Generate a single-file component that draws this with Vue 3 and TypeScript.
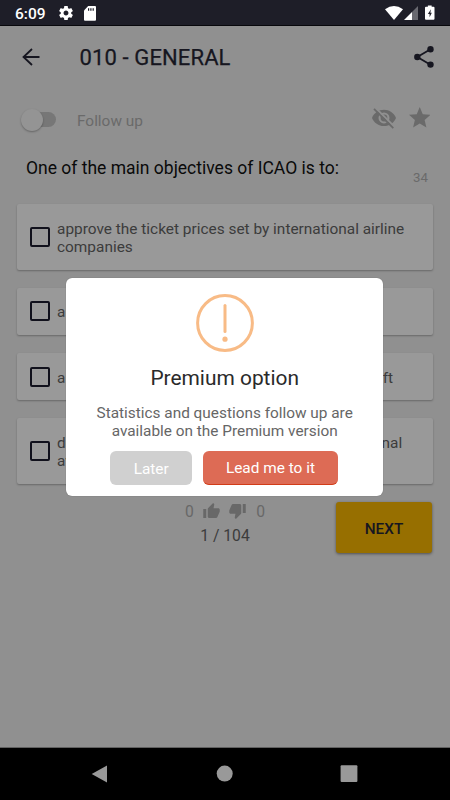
<script setup lang="ts">
import { ref } from 'vue'

interface Answer {
  id: number
  lines: string[]
  checked: boolean
}

const answers = ref<Answer[]>([
  { id: 1, lines: ['approve the ticket prices set by international airline', 'companies'], checked: false },
  { id: 2, lines: ['approve the ticket prices'], checked: false },
  { id: 3, lines: ['approve new international airlines with jet aircraft'], checked: false },
  { id: 4, lines: ['develop principles and techniques for international', 'aviation'], checked: false },
])

const showDialog = ref(true)

function toggle(answer: Answer) {
  answer.checked = !answer.checked
}
</script>

<template>
  <div class="screen">
    <header class="status">
      <span class="clock">6:09</span>
      <svg class="gear" viewBox="2 2 20 20"><path d="M19.43 12.98c.04-.32.07-.64.07-.98s-.03-.66-.07-.98l2.110-1.650c.19-.15.24-.42.12-.64l-2-3.460c-.12-.22-.39-.3-.61-.22l-2.490 1c-.52-.4-1.080-.73-1.690-.98l-.38-2.650C14.460 2.180 14.250 2 14 2h-4c-.25 0-.46.18-.49.42l-.38 2.650c-.61.25-1.170.59-1.690.98l-2.490-1c-.23-.09-.49 0-.61.22l-2 3.460c-.13.22-.07.49.12.64l2.110 1.650c-.04.32-.07.65-.07.98s.03.66.07.98l-2.110 1.650c-.19.15-.24.42-.12.64l2 3.460c.12.22.39.3.61.22l2.490-1c.52.4 1.080.73 1.690.98l.38 2.650c.03.24.24.42.49.42h4c.25 0 .46-.18.49-.42l.38-2.650c.61-.25 1.170-.59 1.690-.98l2.490 1c.23.09.49 0 .61-.22l2-3.460c.12-.22.07-.49-.12-.64l-2.110-1.650zM12 15.500c-1.930 0-3.500-1.570-3.500-3.500s1.570-3.500 3.500-3.500 3.500 1.570 3.500 3.500-1.570 3.500-3.500 3.500z" /></svg>
      <svg class="sd" viewBox="0 0 12 15"><path d="M4.200 0H11q1 0 1 1v12.800q0 1-1 1H1q-1 0-1-1V4.400z" /><path class="slots" d="M4 2.200h1.200v2.600H4zM6.300 2.200h1.200v2.600H6.300zM8.600 2.200h1.200v2.600H8.600z" /></svg>
      <span class="spacer"></span>
      <svg class="wifi" viewBox="0 0 18 14"><path d="M0 3.200Q9-3.200 18 3.200L9 14z" /></svg>
      <svg class="signal" viewBox="0 0 14 14"><path class="dim" d="M14 0v14H8V6z" /><path d="M8 6v8H0z" /></svg>
      <svg class="battery" viewBox="0 0 10 15"><path d="M3 0h4v1.500h2q1 0 1 1V14q0 1-1 1H1q-1 0-1-1V2.500q0-1 1-1h2z" /><path class="bolt" d="M6.300 4L3 9h1.800v3.600L7.200 7.800H5.600z" /></svg>
    </header>

    <div class="toolbar">
      <svg class="back" viewBox="0 0 18 18"><path d="M10 1L1.500 9L10 17M1.500 9H17.500" /></svg>
      <h1>010 - GENERAL</h1>
      <svg class="share" viewBox="0 0 20 22"><path d="M16.500 3.200L3.300 11L16.500 18.700" /><circle cx="16.500" cy="3.300" r="3.200" /><circle cx="3.300" cy="11" r="3.200" /><circle cx="16.500" cy="18.600" r="3.200" /></svg>
    </div>

    <div class="follow">
      <span class="switch"><i></i></span>
      <span class="follow-label">Follow up</span>
      <span class="spacer"></span>
      <svg class="eye" viewBox="0 0 24 21"><path d="M12 1.800C6.600 1.800 2 5 0 9.900c2 4.800 6.600 8.100 12 8.100s10-3.300 12-8.100c-2-4.900-6.600-8.100-12-8.100zm0 13.600a5.500 5.500 0 1 1 0-11a5.500 5.500 0 0 1 0 11z" /><circle cx="12" cy="10" r="3.400" /><path class="gap" d="M3.700 0L23.200 19.500" /><path class="slash" d="M2 .9L21.300 20.200" /></svg>
      <svg class="star" viewBox="2 2 20 19"><path d="M12 17.270L18.180 21l-1.640-7.030L22 9.240l-7.190-.61L12 2 9.190 8.630 2 9.240l5.460 4.730L5.820 21z" /></svg>
    </div>

    <div class="question">
      <p>One of the main objectives of ICAO is to:</p>
      <span>34</span>
    </div>

    <ul class="answers">
      <li v-for="answer in answers" :key="answer.id" :class="{ tall: answer.lines.length > 1 }" @click="toggle(answer)">
        <span class="box" :class="{ on: answer.checked }"></span>
        <div><p v-for="line in answer.lines" :key="line">{{ line }}</p></div>
      </li>
    </ul>

    <footer class="bottom">
      <div class="tally">
        <div class="votes">
          <span>0</span>
          <svg viewBox="1 1 22 20"><path d="M1 21h4V9H1v12zm22-11c0-1.100-.9-2-2-2h-6.310l.95-4.570.03-.32c0-.41-.17-.79-.44-1.060L14.170 1 7.590 7.590C7.220 7.950 7 8.450 7 9v10c0 1.100.9 2 2 2h9c.83 0 1.540-.5 1.840-1.220l3.020-7.050c.09-.23.14-.47.14-.73v-2z" /></svg>
          <svg class="down" viewBox="1 3 22 20"><path d="M15 3H6c-.83 0-1.540.5-1.840 1.220l-3.020 7.050c-.09.23-.14.47-.14.73v2c0 1.100.9 2 2 2h6.310l-.95 4.570-.03.32c0 .41.17.79.44 1.060L9.830 23l6.590-6.590c.36-.36.58-.86.58-1.410V5c0-1.100-.9-2-2-2zm4 0v12h4V3h-4z" /></svg>
          <span>0</span>
        </div>
        <span class="progress">1 / 104</span>
      </div>
      <button class="next">NEXT</button>
    </footer>

    <nav class="system">
      <svg viewBox="0 0 18 18"><path d="M16 .5v17L.7 9z" /></svg>
      <svg viewBox="0 0 18 18"><circle cx="8.700" cy="8.600" r="8" /></svg>
      <svg viewBox="0 0 18 18"><rect x=".6" y=".3" width="16.800" height="16.800" rx="1" /></svg>
    </nav>

    <section v-if="showDialog" class="dialog">
      <svg class="alert" viewBox="0 0 58 58"><circle cx="29" cy="29" r="27.400" /><path d="M29 11.500V37.500" /><circle class="dot" cx="29" cy="45.200" r="2.600" /></svg>
      <h2>Premium option</h2>
      <div class="message">
        <p>Statistics and questions follow up are</p>
        <p>available on the Premium version</p>
      </div>
      <div class="actions">
        <button class="later" @click="showDialog = false">Later</button>
        <button class="lead" @click="showDialog = false">Lead me to it</button>
      </div>
    </section>
  </div>
</template>

<style>
body {
  margin: 0;
  background: #000;
}
</style>

<style scoped>
* {
  box-sizing: border-box;
}

p,
h1,
h2,
ul {
  margin: 0;
  padding: 0;
}

button {
  border: 0;
  padding: 0;
  font-family: inherit;
}

svg {
  display: block;
  flex: none;
  fill: currentColor;
}

.screen {
  position: relative;
  display: flex;
  flex-direction: column;
  width: 450px;
  height: 800px;
  overflow: hidden;
  background: #909090;
  color: #161620;
  font-family: Roboto, "Liberation Sans", sans-serif;
}

.spacer {
  flex: 1;
}

.status {
  display: flex;
  align-items: center;
  height: 26px;
  padding: 0 15.500px 0 15px;
  background: #1e1e28;
  border-bottom: 1px solid #08080c;
  color: #fff;
}

.clock {
  width: 43.500px;
  padding-top: 3px;
  font-size: 15.500px;
  line-height: 20px;
  font-weight: 500;
}

.gear {
  width: 14px;
  height: 14px;
  margin: 1px 11px 0 0;
}

.sd {
  width: 12px;
  height: 15px;
  margin-top: 1px;
}

.slots,
.bolt {
  fill: #1e1e28;
}

.wifi {
  width: 18px;
  height: 14px;
}

.signal {
  width: 14px;
  height: 14px;
  margin: 1px 7px 0 1px;
}

.dim {
  fill: #696970;
}

.battery {
  width: 9.500px;
  height: 15px;
}

.toolbar {
  display: flex;
  align-items: center;
  height: 62px;
  padding: 0 16.500px 0 22px;
}

.back {
  width: 18px;
  height: 18px;
  fill: none;
  stroke: currentColor;
  stroke-width: 1.8;
}

h1 {
  flex: 1;
  margin-left: 39.500px;
  padding-top: 2px;
  font-size: 22px;
  line-height: 28px;
  font-weight: 400;
  -webkit-text-stroke: 0.25px currentColor;
  letter-spacing: 0.12px;
}

.share {
  width: 20px;
  height: 22px;
  margin-bottom: 1px;
}

.share path {
  fill: none;
  stroke: currentColor;
  stroke-width: 1.8;
}

.follow {
  display: flex;
  align-items: center;
  height: 60px;
  padding: 3px 20px 0 21px;
  color: #6a6a6a;
}

.switch {
  display: flex;
  align-items: center;
  width: 35px;
  height: 15px;
  border-radius: 8px;
  background: linear-gradient(90deg, transparent 12px, #777 12px);
}

.switch i {
  width: 22px;
  height: 22px;
  border-radius: 50%;
  background: #949494;
  box-shadow: 0 1px 2px rgba(0, 0, 0, 0.3);
}

.follow-label {
  margin-left: 21px;
  padding-top: 2px;
  font-size: 15.400px;
  line-height: 20px;
}

.eye {
  width: 24px;
  height: 21px;
  margin: 0 12.500px 2px 0;
}

.slash,
.gap {
  fill: none;
  stroke: currentColor;
  stroke-width: 1.8;
}

.gap {
  stroke: #909090;
}

.star {
  width: 21.500px;
  height: 20.500px;
  margin-bottom: 4px;
}

.question {
  display: flex;
  justify-content: space-between;
  height: 56px;
  padding: 10px 22px 0 26px;
}

.question p {
  color: #0a0a0a;
  font-size: 17.500px;
  line-height: 20px;
}

.question span {
  padding-top: 12px;
  color: #6a6a6a;
  font-size: 13.300px;
  line-height: 16px;
}

.answers {
  display: flex;
  flex-direction: column;
  gap: 17.500px;
  padding: 0 17.500px 0 17px;
  list-style: none;
}

.answers li {
  display: flex;
  align-items: center;
  height: 47.700px;
  padding-left: 12.500px;
  border-radius: 2px;
  background: #999;
  box-shadow: 0 1px 2px rgba(0, 0, 0, 0.28);
  color: #3c3c3c;
  font-size: 15.420px;
  line-height: 18px;
  white-space: nowrap;
}

.answers .tall {
  height: 66px;
}

.answers div {
  padding-top: 2px;
}

.box {
  width: 20px;
  height: 20px;
  margin-right: 7.500px;
  border: 2px solid #11111c;
  border-radius: 2px;
}

.box.on {
  background: #11111c;
}

.bottom {
  display: flex;
  justify-content: flex-end;
  padding: 18px 18px 0 0;
}

.tally {
  display: flex;
  flex-direction: column;
  align-items: center;
  width: 80px;
  margin-right: 71px;
  font-size: 15.700px;
}

.votes {
  display: flex;
  align-items: center;
  justify-content: space-between;
  width: 80px;
  height: 20px;
  color: #686868;
}

.votes svg {
  width: 17px;
  height: 15px;
  margin: 0 0 2px -1px;
}

.votes .down {
  margin-bottom: 0;
}

.progress {
  margin-top: 4px;
  color: #3c3c3c;
  line-height: 20px;
}

.next {
  width: 96px;
  height: 51.500px;
  padding-top: 2px;
  border-radius: 3px;
  background: #976f00;
  box-shadow: 0 1px 3px rgba(0, 0, 0, 0.45);
  color: #161620;
  font-size: 15.300px;
  font-weight: 500;
}

.system {
  display: flex;
  align-items: center;
  justify-content: space-between;
  height: 53px;
  margin-top: auto;
  padding: 0 92px 0 91px;
  border-top: 1px solid #606060;
  background: #000;
  color: #999;
}

.system svg {
  width: 18px;
  height: 18px;
}

.dialog {
  position: absolute;
  top: 277.500px;
  left: 66px;
  display: flex;
  flex-direction: column;
  align-items: center;
  width: 317.400px;
  height: 218.500px;
  padding-top: 16px;
  border-radius: 6px;
  background: #fff;
  box-shadow: 0 0 1px rgba(0, 0, 0, 0.4);
}

.alert {
  width: 58px;
  height: 58px;
  color: #f8bb86;
}

.alert circle,
.alert path {
  fill: none;
  stroke: currentColor;
  stroke-width: 3;
}

.alert path {
  stroke-linecap: round;
}

.alert .dot {
  fill: currentColor;
  stroke: none;
}

h2 {
  margin-top: 13px;
  color: #2a2a2a;
  font-size: 20.900px;
  line-height: 26px;
  font-weight: 400;
}

.message {
  margin-top: 13px;
  color: #666;
  font-size: 15.370px;
  line-height: 18px;
  text-align: center;
}

.actions {
  display: flex;
  gap: 11px;
  margin: 11px 1px 0 0;
}

.actions button {
  height: 34px;
  padding-top: 2px;
  border-radius: 6px;
  color: #fff;
  font-size: 15.400px;
}

.later {
  width: 81.500px;
  background: #d0d0d0;
}

.actions .lead {
  width: 135px;
  border-bottom: 1px solid #d23c18;
  background: #dd6b55;
}
</style>
